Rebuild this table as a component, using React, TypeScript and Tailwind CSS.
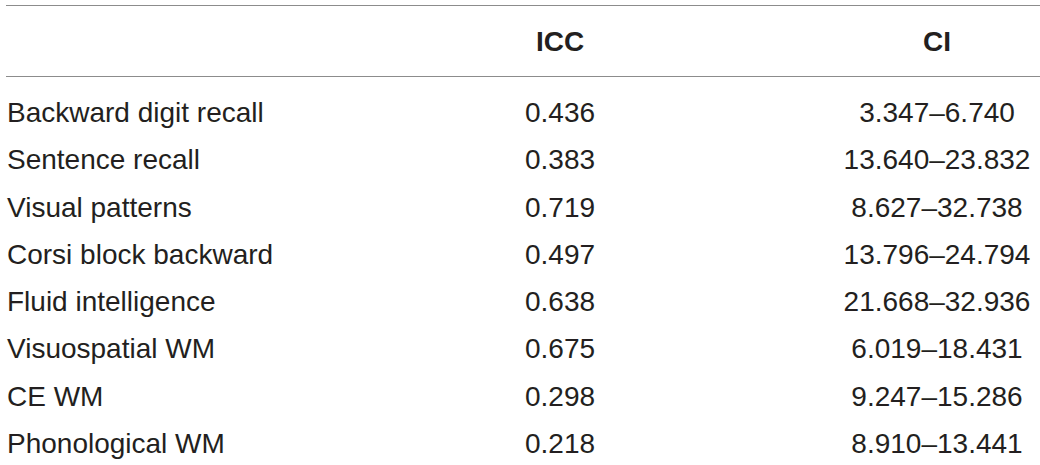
const rows = [
  { label: "Backward digit recall", icc: "0.436", ci: "3.347–6.740" },
  { label: "Sentence recall", icc: "0.383", ci: "13.640–23.832" },
  { label: "Visual patterns", icc: "0.719", ci: "8.627–32.738" },
  { label: "Corsi block backward", icc: "0.497", ci: "13.796–24.794" },
  { label: "Fluid intelligence", icc: "0.638", ci: "21.668–32.936" },
  { label: "Visuospatial WM", icc: "0.675", ci: "6.019–18.431" },
  { label: "CE WM", icc: "0.298", ci: "9.247–15.286" },
  { label: "Phonological WM", icc: "0.218", ci: "8.910–13.441" },
];

const App = () => {
  return (
    <div className="w-[1040px] h-[465px] overflow-hidden bg-white pt-[5px] pl-[6px] text-[#231f20] font-['Liberation_Sans',Arial,sans-serif] text-[28px]">
      <div className="border-t border-[#8c8c8c]">
        <div className="grid grid-cols-[280px_548px_206px] pt-[22px] pb-[20px] leading-[28px] font-bold border-b border-[#8c8c8c]">
          <div />
          <div className="text-center">ICC</div>
          <div className="text-center">CI</div>
        </div>
        <div className="pt-[12px]">
          {rows.map((row) => (
            <div
              key={row.label}
              className="grid grid-cols-[280px_548px_206px] leading-[47.3px] whitespace-nowrap"
            >
              <div className="pl-px">{row.label}</div>
              <div className="text-center">{row.icc}</div>
              <div className="text-center">{row.ci}</div>
            </div>
          ))}
        </div>
      </div>
    </div>
  );
};

export default App;
